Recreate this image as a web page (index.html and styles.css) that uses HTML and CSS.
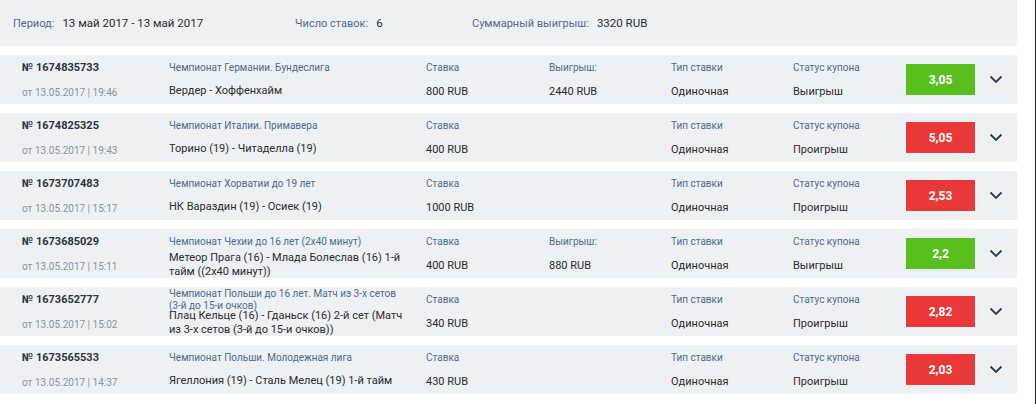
FILE: index.html
```html
<!DOCTYPE html>
<html lang="ru">
<head>
<meta charset="utf-8">
<title>История ставок</title>
<link rel="stylesheet" href="styles.css">
</head>
<body>
<div class="page">
  <div class="content">
    <div class="summary">
      <div class="sum-item sum-period"><span class="sum-label">Период:</span><span class="sum-value">13 май 2017 - 13 май 2017</span></div>
      <div class="sum-item sum-count"><span class="sum-label">Число ставок:</span><span class="sum-value">6</span></div>
      <div class="sum-item"><span class="sum-label">Суммарный выигрыш:</span><span class="sum-value">3320 RUB</span></div>
    </div>

    <div class="bets">
      <div class="bet">
        <div class="c-num">№ 1674835733</div>
        <div class="c-league">Чемпионат Германии. Бундеслига</div>
        <div class="c-lbl">Ставка</div>
        <div class="c-lbl">Выигрыш:</div>
        <div class="c-lbl">Тип ставки</div>
        <div class="c-lbl">Статус купона</div>
        <div class="coef win">3,05</div>
        <div class="toggle"><svg width="14" height="9" viewBox="0 0 14 9"><path d="M1.5 1.5 L7 7 L12.5 1.5" fill="none" stroke="#2c3e52" stroke-width="1.8"/></svg></div>
        <div class="c-date">от 13.05.2017 | 19:46</div>
        <div class="c-match">Вердер - Хоффенхайм</div>
        <div class="c-val">800 RUB</div>
        <div class="c-val">2440 RUB</div>
        <div class="c-val">Одиночная</div>
        <div class="c-val">Выигрыш</div>
      </div>

      <div class="bet">
        <div class="c-num">№ 1674825325</div>
        <div class="c-league">Чемпионат Италии. Примавера</div>
        <div class="c-lbl">Ставка</div>
        <div class="c-lbl"></div>
        <div class="c-lbl">Тип ставки</div>
        <div class="c-lbl">Статус купона</div>
        <div class="coef lose">5,05</div>
        <div class="toggle"><svg width="14" height="9" viewBox="0 0 14 9"><path d="M1.5 1.5 L7 7 L12.5 1.5" fill="none" stroke="#2c3e52" stroke-width="1.8"/></svg></div>
        <div class="c-date">от 13.05.2017 | 19:43</div>
        <div class="c-match">Торино (19) - Читаделла (19)</div>
        <div class="c-val">400 RUB</div>
        <div class="c-val"></div>
        <div class="c-val">Одиночная</div>
        <div class="c-val">Проигрыш</div>
      </div>

      <div class="bet">
        <div class="c-num">№ 1673707483</div>
        <div class="c-league">Чемпионат Хорватии до 19 лет</div>
        <div class="c-lbl">Ставка</div>
        <div class="c-lbl"></div>
        <div class="c-lbl">Тип ставки</div>
        <div class="c-lbl">Статус купона</div>
        <div class="coef lose">2,53</div>
        <div class="toggle"><svg width="14" height="9" viewBox="0 0 14 9"><path d="M1.5 1.5 L7 7 L12.5 1.5" fill="none" stroke="#2c3e52" stroke-width="1.8"/></svg></div>
        <div class="c-date">от 13.05.2017 | 15:17</div>
        <div class="c-match">НК Вараздин (19) - Осиек (19)</div>
        <div class="c-val">1000 RUB</div>
        <div class="c-val"></div>
        <div class="c-val">Одиночная</div>
        <div class="c-val">Проигрыш</div>
      </div>

      <div class="bet">
        <div class="c-num">№ 1673685029</div>
        <div class="c-league">Чемпионат Чехии до 16 лет (2х40 минут)</div>
        <div class="c-lbl">Ставка</div>
        <div class="c-lbl">Выигрыш:</div>
        <div class="c-lbl">Тип ставки</div>
        <div class="c-lbl">Статус купона</div>
        <div class="coef win">2,2</div>
        <div class="toggle"><svg width="14" height="9" viewBox="0 0 14 9"><path d="M1.5 1.5 L7 7 L12.5 1.5" fill="none" stroke="#2c3e52" stroke-width="1.8"/></svg></div>
        <div class="c-date">от 13.05.2017 | 15:11</div>
        <div class="c-match">Метеор Прага (16) - Млада Болеслав (16) 1-й тайм ((2х40 минут))</div>
        <div class="c-val">400 RUB</div>
        <div class="c-val">880 RUB</div>
        <div class="c-val">Одиночная</div>
        <div class="c-val">Выигрыш</div>
      </div>

      <div class="bet">
        <div class="c-num">№ 1673652777</div>
        <div class="c-league">Чемпионат Польши до 16 лет. Матч из 3-х сетов (3-й до 15-и очков)</div>
        <div class="c-lbl">Ставка</div>
        <div class="c-lbl"></div>
        <div class="c-lbl">Тип ставки</div>
        <div class="c-lbl">Статус купона</div>
        <div class="coef lose">2,82</div>
        <div class="toggle"><svg width="14" height="9" viewBox="0 0 14 9"><path d="M1.5 1.5 L7 7 L12.5 1.5" fill="none" stroke="#2c3e52" stroke-width="1.8"/></svg></div>
        <div class="c-date">от 13.05.2017 | 15:02</div>
        <div class="c-match">Плац Кельце (16) - Гданьск (16) 2-й сет (Матч из 3-х сетов (3-й до 15-и очков))</div>
        <div class="c-val">340 RUB</div>
        <div class="c-val"></div>
        <div class="c-val">Одиночная</div>
        <div class="c-val">Проигрыш</div>
      </div>

      <div class="bet">
        <div class="c-num">№ 1673565533</div>
        <div class="c-league">Чемпионат Польши. Молодежная лига</div>
        <div class="c-lbl">Ставка</div>
        <div class="c-lbl"></div>
        <div class="c-lbl">Тип ставки</div>
        <div class="c-lbl">Статус купона</div>
        <div class="coef lose">2,03</div>
        <div class="toggle"><svg width="14" height="9" viewBox="0 0 14 9"><path d="M1.5 1.5 L7 7 L12.5 1.5" fill="none" stroke="#2c3e52" stroke-width="1.8"/></svg></div>
        <div class="c-date">от 13.05.2017 | 14:37</div>
        <div class="c-match">Ягеллония (19) - Сталь Мелец (19) 1-й тайм</div>
        <div class="c-val">430 RUB</div>
        <div class="c-val"></div>
        <div class="c-val">Одиночная</div>
        <div class="c-val">Проигрыш</div>
      </div>
    </div>
  </div>
</div>
</body>
</html>
```

FILE: styles.css
```css
html, body {
  margin: 0;
  padding: 0;
  background: #ffffff;
}

body {
  font-family: Roboto, "Liberation Sans", Arial, sans-serif;
  color: #2b2b2b;
}

.page {
  width: 1036px;
  height: 404px;
  box-sizing: border-box;
  border-right: 1px solid #1f1f1f;
  overflow: hidden;
}

.content {
  width: 1017px;
}

.summary {
  height: 46px;
  background: #eef1f4;
  display: flex;
  align-items: center;
  padding-left: 13px;
}

.sum-item {
  display: flex;
  align-items: baseline;
}

.sum-period { width: 282px; }
.sum-count { width: 177px; }

.sum-label {
  font-size: 11px;
  color: #4d6b8a;
  margin-right: 8px;
}

.sum-value {
  font-size: 11.5px;
  color: #2b2b2b;
}

.bets {
  margin-top: 9px;
  display: flex;
  flex-direction: column;
  gap: 9px;
}

.bet {
  height: 49px;
  background: #eef1f4;
  display: grid;
  grid-template-columns: 147px 257px 123px 122px 122px 113px 69px 1fr;
  grid-template-rows: 25px 24px;
  padding-left: 22px;
  align-items: center;
}

.c-num {
  font-size: 11px;
  font-weight: 700;
  color: #2b3440;
}

.c-date {
  font-size: 10px;
  color: #8594a4;
  padding-top: 1px;
}

.c-league {
  font-size: 10px;
  line-height: 12px;
  color: #4d6b8a;
  padding-right: 28px;
}

.c-match {
  font-size: 11px;
  line-height: 14px;
  color: #2b2b2b;
  padding-right: 18px;
  margin-top: -2px;
}

.c-lbl {
  font-size: 10px;
  color: #4d6b8a;
}

.c-val {
  font-size: 11px;
  color: #2b2b2b;
  margin-top: -1px;
}

.coef {
  grid-row: 1 / 3;
  grid-column: 7;
  height: 31px;
  display: flex;
  align-items: center;
  justify-content: center;
  color: #ffffff;
  font-weight: 700;
  font-size: 12px;
}

.coef.win { background: #59bf1f; }
.coef.lose { background: #ea3838; }

.toggle {
  grid-row: 1 / 3;
  grid-column: 8;
  display: flex;
  align-items: center;
  justify-content: center;
  padding-right: 1px;
}

.toggle svg { display: block; }
```
